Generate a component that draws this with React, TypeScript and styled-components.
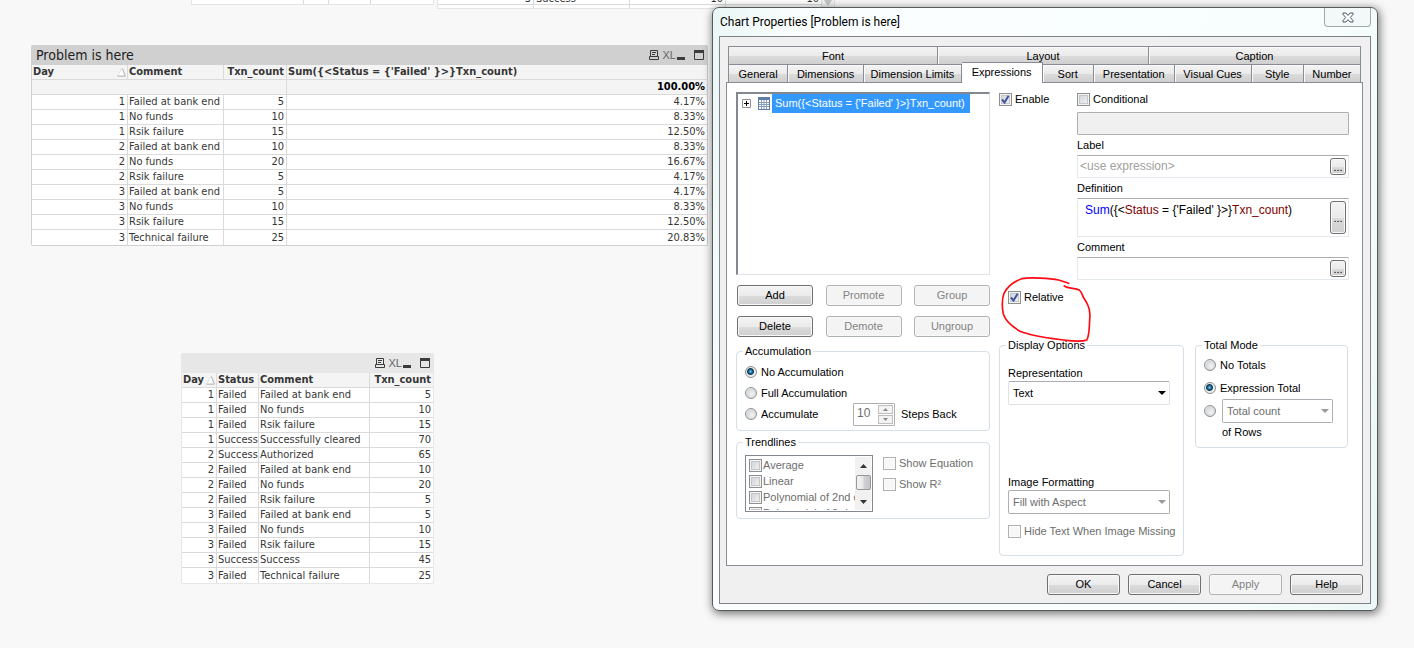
import React, { ReactNode, useId, useState } from "react";
import styled, { createGlobalStyle, css } from "styled-components";

const uiFont = `"Liberation Sans", Arial, sans-serif`;
const sheetFont = `"DejaVu Sans Condensed", "DejaVu Sans", Tahoma, sans-serif`;

const GlobalStyle = createGlobalStyle`
  * { box-sizing: border-box; }
  body { margin: 0; background: #f8f8f8; font-family: ${uiFont}; font-size: 11px; line-height: 14px; color: #000; }
  button, input, select, textarea { font: inherit; color: inherit; margin: 0; }
`;

const Sheet = styled.main`
  position: relative;
  display: grid;
  grid-template-columns: minmax(0, 1fr) minmax(600px, 666px);
  align-items: start;
  min-height: 100vh;
  padding-right: 36px;
  overflow: hidden;
`;

const ChartColumn = styled.div`
  display: flex;
  flex-direction: column;
  padding: 45px 4px 0 31px;
`;

/* ---------- sheet tables ---------- */

const Chart = styled.section<{ $tone: string }>`
  border: 1px solid ${(p) => p.$tone};
  border-top: 0;
  border-radius: 2px;
  font-family: ${sheetFont};
  color: #363636;
`;

const SmallChart = styled(Chart)`
  width: 253px;
  margin: 107px 0 0 150px;
`;

const CaptionBar = styled.header<{ $tone: string }>`
  display: flex;
  align-items: center;
  height: 20px;
  padding: 0 3px 0 4px;
  background: ${(p) => p.$tone};
`;

const CaptionTitle = styled.h2`
  flex: 1;
  margin: 0;
  font-size: 14px;
  font-weight: 400;
  line-height: 18px;
  color: #222;
`;

const CaptionButton = styled.button<{ $gap: number }>`
  display: flex;
  align-items: center;
  justify-content: center;
  height: 14px;
  margin-left: ${(p) => p.$gap}px;
  padding: 0;
  border: 0;
  background: none;
  color: #3c3c3c;
`;

const ExcelMark = styled.span`
  font: 11px/14px ${uiFont};
  color: #666;
`;

const DataTable = styled.table`
  width: 100%;
  table-layout: fixed;
  border-collapse: separate;
  border-spacing: 0;
  font-size: 11px;
  line-height: 14px;
`;

const Cell = styled.td<{ $right?: boolean }>`
  height: 15px;
  padding: 0 2px 0 1px;
  border-right: 1px solid #dadada;
  border-bottom: 1px solid #dadada;
  background: #fff;
  text-align: ${(p) => (p.$right ? "right" : "left")};
  white-space: nowrap;
  &:last-child { border-right: 0; }
  tr:last-child > & { border-bottom: 0; }
`;

const HeadCell = styled(Cell).attrs({ as: "th", scope: "col" })`
  background: #f4f4f4;
  font-weight: 700;
  thead tr:last-child > & { border-bottom: 1px solid #dadada; }
`;

const TotalCell = styled(Cell)`
  background: #f4f4f4;
  color: #000;
  font-weight: 700;
`;

const SortHead = styled.span`
  display: flex;
  align-items: center;
  justify-content: space-between;
  margin-right: -1px;
`;

const SortMark = () => (
  <svg width="9" height="10" viewBox="0 0 9 10" aria-hidden="true">
    <path d="M0.5 9L5 1L8 9z" fill="#fff" stroke="#e0e0e0" strokeWidth="1" />
    <path d="M0.5 9.2H8.4M8.4 9L5.4 1.5" stroke="#b8b8b8" strokeWidth="1" fill="none" />
  </svg>
);

const CaptionTools = () => (
  <>
    <CaptionButton $gap={0} aria-label="Print">
      <svg width="10" height="10" viewBox="0 0 10 10" fill="none" stroke="currentColor">
        <path d="M1.5 7V0.5H8.5V7" />
        <path d="M3 2.5H7M3 4.5H6" />
        <path d="M0.5 6.5H9.5V9.5H0.5z" />
      </svg>
    </CaptionButton>
    <CaptionButton $gap={4} aria-label="Export to Excel">
      <ExcelMark>XL</ExcelMark>
    </CaptionButton>
    <CaptionButton $gap={1} aria-label="Minimize">
      <svg width="8" height="10" viewBox="0 0 8 10"><path d="M0 7H8V10H0z" fill="currentColor" /></svg>
    </CaptionButton>
    <CaptionButton $gap={9} aria-label="Maximize">
      <svg width="10" height="10" viewBox="0 0 10 10" fill="none" stroke="currentColor">
        <path d="M0.5 0.5H9.5V9.5H0.5z" /><path d="M0 1.5H10" strokeWidth="3" />
      </svg>
    </CaptionButton>
  </>
);

/* ---------- tables scrolled off the top edge ---------- */

const ScrolledOff = styled.div`
  position: absolute;
  top: 0;
  left: 191px;
  display: flex;
  align-items: flex-start;
  gap: 3px;
`;

const EmptyRow = styled.div`
  display: grid;
  grid-template-columns: 111px 25px 42px 1fr;
  width: 243px;
  height: 5px;
  border: 1px solid #e4e4e4;
  border-top: 0;
  background: #fff;
  & > span + span { border-left: 1px solid #dadada; }
`;

const CutTable = styled.div`
  display: grid;
  grid-template-columns: 384px 12px;
  width: 398px;
  height: 9px;
  overflow: hidden;
  border: 1px solid #e4e4e4;
  border-top: 0;
  background: #fff;
  font: 11px/16px ${sheetFont};
  color: #363636;
`;

const CutRow = styled.div<{ $height: number; $end?: boolean }>`
  display: grid;
  grid-template-columns: repeat(4, 96px);
  grid-template-rows: 100%;
  height: ${(p) => p.$height}px;
  overflow: hidden;
  ${(p) => p.$end && css`border-bottom: 1px solid #dadada; line-height: 10px;`}
  & > span {
    display: flex;
    align-items: ${(p) => (p.$end ? "flex-end" : "flex-start")};
    padding: 0 2px;
    border-right: 1px solid #dadada;
  }
  & > span:nth-child(2n + 1), & > span:last-child { justify-content: flex-end; }
`;

/* ---------- dialog ---------- */

const Dialog = styled.section`
  position: relative;
  display: flex;
  flex-direction: column;
  margin-top: 7px;
  padding: 0 6px 6px;
  border: 1px solid #555b5b;
  border-radius: 7px;
  background: linear-gradient(100deg, #eaf6f6 0, #fbfefe 12%, #f8fefe 80%, #edf6f6 100%);
  box-shadow: 1px 2px 8px 1px rgba(0, 0, 0, 0.5);
`;

const TitleBar = styled.header`
  display: flex;
  align-items: flex-start;
  justify-content: space-between;
  height: 28px;
  padding-left: 1px;
`;

const Title = styled.h1`
  margin: 5px 0 0;
  font: 400 12px/18px Roboto, "Segoe UI", sans-serif;
`;

const CloseButton = styled.button`
  display: flex;
  align-items: center;
  justify-content: center;
  width: 47px;
  height: 19px;
  padding: 0;
  border: 1px solid #a2a8ab;
  border-top: 0;
  border-radius: 0 0 4px 4px;
  background: #f3f8f8;
`;

const DialogBody = styled.div`
  display: flex;
  flex-direction: column;
  padding: 9px 7px 8px 6px;
  border: 1px solid #7d8286;
  background: #f0f0f0;
`;

const TabRow = styled.div`
  display: flex;
  height: 18px;
  padding: 0 2px;
`;

const Tab = styled.button<{ $size: number; $active?: boolean }>`
  flex: ${(p) => p.$size} 1 0;
  min-width: 0;
  padding: 2px 0 0;
  border: 1px solid #898c95;
  border-width: 1px 1px 0 1px;
  background: linear-gradient(#f3f3f3 0, #ebebeb 50%, #dcdcdc 51%, #cfcfcf 100%);
  line-height: 15px;
  white-space: nowrap;
  & + & { border-left-width: 0; box-shadow: inset 1px 1px #fafafa; }
  ${(p) =>
    p.$active &&
    css`
      z-index: 1;
      margin: -2px 0 -1px;
      padding: 2px 0 3px;
      background: #fff;
    `}
`;

const TabPage = styled.div`
  display: grid;
  grid-template-columns: 254px minmax(0, 350px);
  column-gap: 9px;
  padding: 9px 12px 9px 9px;
  border: 1px solid #898c95;
  background: #fff;
`;

const Column = styled.div`
  display: flex;
  flex-direction: column;
`;

const TreeBox = styled.div`
  height: 183px;
  border: 1px solid #828790;
  border-width: 2px 1px 1px 2px;
  border-color: #828790 #dfe2e6 #dfe2e6 #828790;
  background: #fff;
`;

const TreeItem = styled.div`
  display: flex;
  align-items: center;
  height: 19px;
  padding-left: 4px;
`;

const TreeLabel = styled.span`
  margin-left: 1px;
  padding: 0 5px 0 3px;
  background: #39f;
  color: #fff;
  line-height: 19px;
  white-space: pre;
`;

const ButtonGrid = styled.div`
  display: grid;
  grid-template-columns: repeat(3, 76px);
  justify-content: space-between;
  row-gap: 10px;
  margin: 10px 0 7px;
  padding-left: 1px;
`;

const PushButton = styled.button`
  height: 21px;
  padding: 0;
  border: 1px solid #707070;
  border-radius: 3px;
  background: linear-gradient(#f3f3f3 0, #ebebeb 50%, #dcdcdc 51%, #cfcfcf 100%);
  box-shadow: inset 0 0 0 1px #f8f8f8;
  line-height: 15px;
  &:disabled {
    border-color: #adb2b5;
    background: #f4f4f4;
    color: #838383;
  }
`;

const Group = styled.fieldset<{ $height: number }>`
  display: flex;
  flex-direction: column;
  min-width: 0;
  height: ${(p) => p.$height}px;
  margin: 0;
  padding: 0 8px;
  border: 1px solid #d5dfe5;
  border-radius: 4px;
`;

const Legend = styled.legend`
  height: 14px;
  margin-left: -2px;
  padding: 0 2px;
`;

const OptionRow = styled.div<{ $height: number }>`
  display: flex;
  align-items: center;
  gap: 6px;
  height: ${(p) => p.$height}px;
`;

const ChoiceLabel = styled.label<{ $muted?: boolean; $width?: number }>`
  display: flex;
  align-items: center;
  gap: 3px;
  width: ${(p) => (p.$width ? `${p.$width}px` : "auto")};
  color: ${(p) => (p.$muted ? "#6d6d6d" : "#000")};
  white-space: nowrap;
`;

const Stack = styled.span`
  display: grid;
  flex: none;
  & > * { grid-area: 1 / 1; }
  & > svg { pointer-events: none; place-self: center; }
`;

const TickInput = styled.input.attrs({ type: "checkbox" })`
  appearance: none;
  width: 13px;
  height: 13px;
  border: 1px solid #8e8f8f;
  background: linear-gradient(135deg, #cbcfd5, #f6f6f6);
  box-shadow: inset 0 0 0 1px #f4f4f4, inset 0 0 0 2px #c3c7cc;
  &:disabled {
    border-color: #b1b1b1;
    background: #f8f8f8;
    box-shadow: inset 0 0 0 1px #fbfbfb;
  }
`;

const RadioInput = styled.input.attrs({ type: "radio" })`
  appearance: none;
  flex: none;
  width: 12px;
  height: 12px;
  margin-right: 1px;
  border: 1px solid #8e8f8f;
  border-radius: 50%;
  background: radial-gradient(circle at 60% 60%, #f4f4f4 0, #d4d7da 60%, #f4f4f4 75%);
  &:checked {
    background: radial-gradient(circle at 45% 45%, #7fd3f0 0, #1b6d9a 22%, #10304a 38%, #e8ecef 50%, #f4f4f4 100%);
  }
`;

type ChoiceProps = { label: string; checked?: boolean; disabled?: boolean; muted?: boolean };

const Tick = ({ label, checked = false, disabled, muted }: ChoiceProps) => {
  const [on, setOn] = useState(checked);
  return (
    <ChoiceLabel $muted={disabled || muted}>
      <Stack>
        <TickInput checked={on} disabled={disabled} onChange={() => setOn(!on)} />
        {on && (
          <svg width="9" height="9" viewBox="0 0 9 9">
            <path d="M1 4.5L3.5 7.5L7.6 0.8" fill="none" stroke="#42549b" strokeWidth="2" />
          </svg>
        )}
      </Stack>
      {label}
    </ChoiceLabel>
  );
};

type RadioProps = { label: string; name: string; checked?: boolean; width?: number };

const Radio = ({ label, name, checked, width }: RadioProps) => (
  <ChoiceLabel $width={width}>
    <RadioInput name={name} defaultChecked={checked} />
    {label}
  </ChoiceLabel>
);

const Spinner = styled.div`
  display: flex;
  width: 42px;
  height: 23px;
  padding: 1px;
  border: 1px solid #afafaf;
  border-radius: 1px;
`;

const SpinnerInput = styled.input`
  flex: 1;
  min-width: 0;
  padding: 0 0 2px 2px;
  border: 0;
  background: #fff;
  color: #6d6d6d;
  font-size: 12px;
`;

const SpinnerButtons = styled.span`
  display: grid;
  width: 15px;
  gap: 1px;
`;

const SpinnerButton = styled.button`
  display: grid;
  place-items: center;
  padding: 0;
  border: 1px solid #bfbfbf;
  background: #f3f3f3;
`;

const PickList = styled.div`
  display: flex;
  width: 128px;
  height: 57px;
  padding: 1px;
  overflow: hidden;
  border: 1px solid #828790;
`;

const PickItems = styled.div`
  flex: 1;
  min-width: 0;
  padding-left: 2px;
  overflow: hidden;
  & > label { height: 16px; gap: 1px; }
`;

const ScrollBar = styled.div`
  display: flex;
  flex-direction: column;
  align-items: center;
  width: 16px;
  padding-top: 7px;
  background: #f1f1f1;
`;

const ScrollThumb = styled.span`
  width: 15px;
  height: 15px;
  margin: 7px 0 10px;
  border: 1px solid #979797;
  border-radius: 2px;
  background: linear-gradient(90deg, #f3f3f3, #e8e8e8 48%, #d2d2d6 52%, #c5c5c9);
`;

const TrendRow = styled.div`
  display: flex;
  gap: 10px;
`;

const TrendFlags = styled.div`
  display: flex;
  flex-direction: column;
`;

const ExpressionForm = styled.div`
  display: grid;
  grid-template-columns: 78px minmax(0, 272px);
  align-items: start;
`;

const FieldLabel = styled.label<{ $height: number }>`
  display: flex;
  align-items: center;
  height: ${(p) => p.$height}px;
`;

const FieldBox = styled.div<{ $height: number; $disabled?: boolean }>`
  display: flex;
  align-items: stretch;
  height: ${(p) => p.$height}px;
  padding: 2px;
  border: 1px solid #e3e9ef;
  border-top-color: #abadb3;
  border-radius: 1px;
  background: ${(p) => (p.$disabled ? "#f0f0f0" : "#fff")};
  ${(p) => p.$disabled && css`border-color: #afafaf;`}
`;

const TextField = styled.input`
  flex: 1;
  min-width: 0;
  padding: 0 0 2px;
  border: 0;
  outline: 0;
  background: none;
  font-size: 12px;
  &::placeholder { color: #a0a0a0; opacity: 1; }
`;

const Formula = styled.div`
  flex: 1;
  padding: 1px 5px;
  font: 12px/17px ${uiFont};
  white-space: pre;
`;

const FormulaPart = styled.span<{ $tone: string }>`
  color: ${(p) => p.$tone};
`;

const MoreButton = styled(PushButton)`
  width: 16px;
  height: auto;
  line-height: 12px;
`;

const RelativeRow = styled.div`
  position: relative;
  display: flex;
  align-items: center;
  height: 20px;
  margin: 7px 0 31px;
  padding-left: 9px;
`;

const PenMark = styled.svg`
  position: absolute;
  left: 2px;
  top: -11px;
  z-index: 2;
  pointer-events: none;
`;

const GroupPair = styled.div`
  display: grid;
  grid-template-columns: 185px minmax(0, 153px);
  column-gap: 11px;
  align-items: start;
`;

const SelectBox = styled(Stack)<{ $disabled?: boolean; $width: number }>`
  width: ${(p) => p.$width}px;
  & > select {
    appearance: none;
    width: 100%;
    height: 24px;
    padding: 0 20px 0 4px;
    border: 1px solid ${(p) => (p.$disabled ? "#afafaf" : "#dfe3e8")};
    border-top-color: #abadb3;
    border-radius: 2px;
    background: #fff;
    color: ${(p) => (p.$disabled ? "#6d6d6d" : "#000")};
    opacity: 1;
  }
  & > svg { place-self: center end; margin-right: 4px; }
`;

type PickProps = { id?: string; value: string; width: number; disabled?: boolean; label?: string };

const Pick = ({ id, value, width, disabled, label }: PickProps) => (
  <SelectBox $width={width} $disabled={disabled}>
    <select id={id} disabled={disabled} aria-label={label}>
      <option>{value}</option>
    </select>
    <svg width="8" height="4" viewBox="0 0 8 4">
      <path d="M0 0H8L4 4z" fill={disabled ? "#9a9a9a" : "#000"} />
    </svg>
  </SelectBox>
);

const RowsNote = styled.span`
  padding-left: 18px;
  line-height: 16px;
`;

const Spacer = styled.div<{ $height: number }>`
  flex: none;
  height: ${(p) => p.$height}px;
`;

const Footer = styled.footer`
  display: grid;
  grid-template-columns: repeat(4, 73px);
  justify-content: end;
  column-gap: 8px;
  margin-top: 8px;
`;

/* ---------- data ---------- */

const expression = "Sum({<Status = {'Failed' }>}Txn_count)";

const failures: [number, string, number, string][] = [
  [1, "Failed at bank end", 5, "4.17%"],
  [1, "No funds", 10, "8.33%"],
  [1, "Rsik failure", 15, "12.50%"],
  [2, "Failed at bank end", 10, "8.33%"],
  [2, "No funds", 20, "16.67%"],
  [2, "Rsik failure", 5, "4.17%"],
  [3, "Failed at bank end", 5, "4.17%"],
  [3, "No funds", 10, "8.33%"],
  [3, "Rsik failure", 15, "12.50%"],
  [3, "Technical failure", 25, "20.83%"],
];

const transactions: [number, string, string, number][] = [
  [1, "Failed", "Failed at bank end", 5],
  [1, "Failed", "No funds", 10],
  [1, "Failed", "Rsik failure", 15],
  [1, "Success", "Successfully cleared", 70],
  [2, "Success", "Authorized", 65],
  [2, "Failed", "Failed at bank end", 10],
  [2, "Failed", "No funds", 20],
  [2, "Failed", "Rsik failure", 5],
  [3, "Failed", "Failed at bank end", 5],
  [3, "Failed", "No funds", 10],
  [3, "Failed", "Rsik failure", 15],
  [3, "Success", "Success", 45],
  [3, "Failed", "Technical failure", 25],
];

const upperTabs: [string, number][] = [["Font", 209], ["Layout", 211], ["Caption", 212]];
const lowerTabs: [string, number][] = [
  ["General", 59], ["Dimensions", 76], ["Dimension Limits", 98], ["Expressions", 81], ["Sort", 51],
  ["Presentation", 81], ["Visual Cues", 77], ["Style", 52], ["Number", 57],
];

const formula: [string, string][] = [
  ["Sum", "#0000ff"], ["({<", "#000"], ["Status", "#800000"], [" = {'Failed' }>}", "#000"],
  ["Txn_count", "#800000"], [")", "#000"],
];

const Field = ({ label, height, children, id }: { label: string; height: number; id: string; children: ReactNode }) => (
  <>
    <FieldLabel $height={20} id={id + "-label"} htmlFor={id}>{label}</FieldLabel>
    <FieldBox $height={height}>
      {children}
      <MoreButton aria-label={`Edit ${label}`}>...</MoreButton>
    </FieldBox>
  </>
);

const FailureChart = () => (
  <Chart $tone="#d0d0d0">
    <CaptionBar $tone="#d0d0d0">
      <CaptionTitle>Problem is here</CaptionTitle>
      <CaptionTools />
    </CaptionBar>
    <DataTable>
      <colgroup>
        <col style={{ width: 96 }} /><col style={{ width: 96 }} /><col style={{ width: 63 }} /><col />
      </colgroup>
      <thead>
        <tr>
          <HeadCell><SortHead>Day<SortMark /></SortHead></HeadCell>
          <HeadCell>Comment</HeadCell>
          <HeadCell $right>Txn_count</HeadCell>
          <HeadCell>{expression}</HeadCell>
        </tr>
      </thead>
      <tbody>
        <tr>
          <TotalCell colSpan={3} />
          <TotalCell $right>100.00%</TotalCell>
        </tr>
        {failures.map(([day, comment, count, share], i) => (
          <tr key={i}>
            <Cell $right>{day}</Cell>
            <Cell>{comment}</Cell>
            <Cell $right>{count}</Cell>
            <Cell $right>{share}</Cell>
          </tr>
        ))}
      </tbody>
    </DataTable>
  </Chart>
);

const TransactionChart = () => (
  <SmallChart $tone="#e7e7e7">
    <CaptionBar $tone="#e7e7e7">
      <CaptionTitle />
      <CaptionTools />
    </CaptionBar>
    <DataTable>
      <colgroup>
        <col style={{ width: 35 }} /><col style={{ width: 42 }} /><col style={{ width: 111 }} /><col />
      </colgroup>
      <thead>
        <tr>
          <HeadCell><SortHead>Day<SortMark /></SortHead></HeadCell>
          <HeadCell>Status</HeadCell>
          <HeadCell>Comment</HeadCell>
          <HeadCell $right>Txn_count</HeadCell>
        </tr>
      </thead>
      <tbody>
        {transactions.map(([day, status, comment, count], i) => (
          <tr key={i}>
            <Cell $right>{day}</Cell>
            <Cell>{status}</Cell>
            <Cell>{comment}</Cell>
            <Cell $right>{count}</Cell>
          </tr>
        ))}
      </tbody>
    </DataTable>
  </SmallChart>
);

const ChartProperties = () => {
  const id = useId();
  return (
    <Dialog role="dialog" aria-label="Chart Properties">
      <TitleBar>
        <Title>Chart Properties [Problem is here]</Title>
        <CloseButton aria-label="Close">
          <svg width="12" height="11" viewBox="0 0 12 11">
            <path
              d="M1 1H4L6 3.4L8 1H11V2.4L8.3 5.5L11 8.6V10H8L6 7.6L4 10H1V8.6L3.7 5.5L1 2.4z"
              fill="#fff" stroke="#4e5566" strokeWidth="1"
            />
          </svg>
        </CloseButton>
      </TitleBar>
      <DialogBody>
        <TabRow role="tablist">
          {upperTabs.map(([name, size]) => <Tab key={name} role="tab" $size={size}>{name}</Tab>)}
        </TabRow>
        <TabRow role="tablist">
          {lowerTabs.map(([name, size]) => (
            <Tab key={name} role="tab" $size={size} $active={name === "Expressions"} aria-selected={name === "Expressions"}>
              {name}
            </Tab>
          ))}
        </TabRow>
        <TabPage>
          <Column>
            <TreeBox>
              <TreeItem>
                <svg width="9" height="9" viewBox="0 0 9 9" fill="none">
                  <path d="M0.5 0.5H8.5V8.5H0.5z" stroke="#919191" /><path d="M2 4.5H7M4.5 2V7" stroke="#000" />
                </svg>
                <svg width="20" height="13" viewBox="0 0 20 13">
                  <path d="M7 0H19V13H7z" fill="#5f7ea6" />
                  <path d="M8 3H18V12H8z" fill="#fff" />
                  <path d="M8 5.5H18M8 7.5H18M8 9.5H18M10.5 3V12M13 3V12M15.5 3V12" stroke="#8aa0bd" strokeWidth="1" />
                </svg>
                <TreeLabel>{expression}</TreeLabel>
              </TreeItem>
            </TreeBox>
            <ButtonGrid>
              <PushButton>Add</PushButton>
              <PushButton disabled>Promote</PushButton>
              <PushButton disabled>Group</PushButton>
              <PushButton>Delete</PushButton>
              <PushButton disabled>Demote</PushButton>
              <PushButton disabled>Ungroup</PushButton>
            </ButtonGrid>
            <Group $height={87}>
              <Legend>Accumulation</Legend>
              <OptionRow $height={28}><Radio name="acc" label="No Accumulation" checked /></OptionRow>
              <OptionRow $height={14}><Radio name="acc" label="Full Accumulation" /></OptionRow>
              <OptionRow $height={28}>
                <Radio name="acc" label="Accumulate" width={102} />
                <Spinner>
                  <SpinnerInput id={id + "steps"} defaultValue="10" />
                  <SpinnerButtons>
                    <SpinnerButton aria-label="More">
                      <svg width="5" height="3" viewBox="0 0 5 3"><path d="M0 3H5L2.5 0z" fill="#888" /></svg>
                    </SpinnerButton>
                    <SpinnerButton aria-label="Fewer">
                      <svg width="5" height="3" viewBox="0 0 5 3"><path d="M0 0H5L2.5 3z" fill="#888" /></svg>
                    </SpinnerButton>
                  </SpinnerButtons>
                </Spinner>
                <label htmlFor={id + "steps"}>Steps Back</label>
              </OptionRow>
            </Group>
            <Spacer $height={4} />
            <Group $height={84}>
              <Legend>Trendlines</Legend>
              <Spacer $height={6} />
              <TrendRow>
                <PickList>
                  <PickItems>
                    <Tick muted label="Average" />
                    <Tick muted label="Linear" />
                    <Tick muted label="Polynomial of 2nd degree" />
                    <Tick muted label="Polynomial of 3rd degree" />
                  </PickItems>
                  <ScrollBar>
                    <svg width="7" height="4" viewBox="0 0 7 4"><path d="M0 4H7L3.5 0z" fill="#333" /></svg>
                    <ScrollThumb />
                    <svg width="7" height="4" viewBox="0 0 7 4"><path d="M0 0H7L3.5 4z" fill="#333" /></svg>
                  </ScrollBar>
                </PickList>
                <TrendFlags>
                  <OptionRow $height={16}><Tick disabled label="Show Equation" /></OptionRow>
                  <OptionRow $height={26}><Tick disabled label="Show R²" /></OptionRow>
                </TrendFlags>
              </TrendRow>
            </Group>
          </Column>
          <Column>
            <ExpressionForm>
              <OptionRow $height={14}><Tick label="Enable" checked /></OptionRow>
              <Column>
                <OptionRow $height={14}><Tick label="Conditional" /></OptionRow>
                <Spacer $height={6} />
                <FieldBox $height={23} $disabled>
                  <TextField disabled aria-label="Condition" />
                </FieldBox>
                <Field label="Label" height={23} id={id + "label"}>
                  <TextField id={id + "label"} placeholder="<use expression>" />
                </Field>
                <Field label="Definition" height={39} id={id + "def"}>
                  <Formula id={id + "def"} role="textbox" tabIndex={0} aria-labelledby={id + "def-label"}>
                    {formula.map(([text, tone], i) => <FormulaPart key={i} $tone={tone}>{text}</FormulaPart>)}
                  </Formula>
                </Field>
                <Field label="Comment" height={23} id={id + "comment"}>
                  <TextField id={id + "comment"} />
                </Field>
              </Column>
            </ExpressionForm>
            <RelativeRow>
              <Tick label="Relative" checked />
              <PenMark width="92" height="68" viewBox="33 16 276 204" fill="none" stroke="#ff0a12" strokeWidth="5" strokeLinecap="round">
                <path d="M236 38L206 28C180 22 120 20 95 24C65 35 50 52 42 68C35 88 36 110 40 130C48 155 70 170 90 182C130 198 180 203 220 208C250 212 275 214 290 208C300 195 297 160 300 135C300 110 290 95 280 80C275 68 275 65 268 58C255 52 235 54 223 46" />
              </PenMark>
            </RelativeRow>
            <GroupPair>
              <Group $height={218}>
                <Legend>Display Options</Legend>
                <Spacer $height={12} />
                <FieldLabel $height={17} htmlFor={id + "rep"}>Representation</FieldLabel>
                <Pick id={id + "rep"} value="Text" width={162} />
                <Spacer $height={68} />
                <FieldLabel $height={17} htmlFor={id + "img"}>Image Formatting</FieldLabel>
                <Pick id={id + "img"} value="Fill with Aspect" width={162} disabled />
                <OptionRow $height={34}><Tick disabled label="Hide Text When Image Missing" /></OptionRow>
              </Group>
              <Group $height={110}>
                <Legend>Total Mode</Legend>
                <OptionRow $height={26}><Radio name="total" label="No Totals" /></OptionRow>
                <OptionRow $height={20}><Radio name="total" label="Expression Total" checked /></OptionRow>
                <OptionRow $height={26}>
                  <Radio name="total" label="" width={12} />
                  <Pick value="Total count" width={111} disabled label="Total function" />
                </OptionRow>
                <RowsNote>of Rows</RowsNote>
              </Group>
            </GroupPair>
          </Column>
        </TabPage>
        <Footer>
          <PushButton>OK</PushButton>
          <PushButton>Cancel</PushButton>
          <PushButton disabled>Apply</PushButton>
          <PushButton>Help</PushButton>
        </Footer>
      </DialogBody>
    </Dialog>
  );
};

export default function App() {
  return (
    <>
      <GlobalStyle />
      <Sheet>
        <ScrolledOff>
          <EmptyRow><span /><span /><span /><span /></EmptyRow>
          <CutTable>
            <div>
              <CutRow $height={5} $end><span>3</span><span>Success</span><span>10</span><span>10</span></CutRow>
              <CutRow $height={3}><span /><span>Technical failure</span><span /><span /></CutRow>
            </div>
            <svg width="12" height="8" viewBox="0 0 12 8">
              <path d="M0 0H12V8H0z" fill="#f2f2f2" />
              <path d="M2 0H10L6 6z" fill="#c4c4c4" />
            </svg>
          </CutTable>
        </ScrolledOff>
        <ChartColumn>
          <FailureChart />
          <TransactionChart />
        </ChartColumn>
        <ChartProperties />
      </Sheet>
    </>
  );
}
